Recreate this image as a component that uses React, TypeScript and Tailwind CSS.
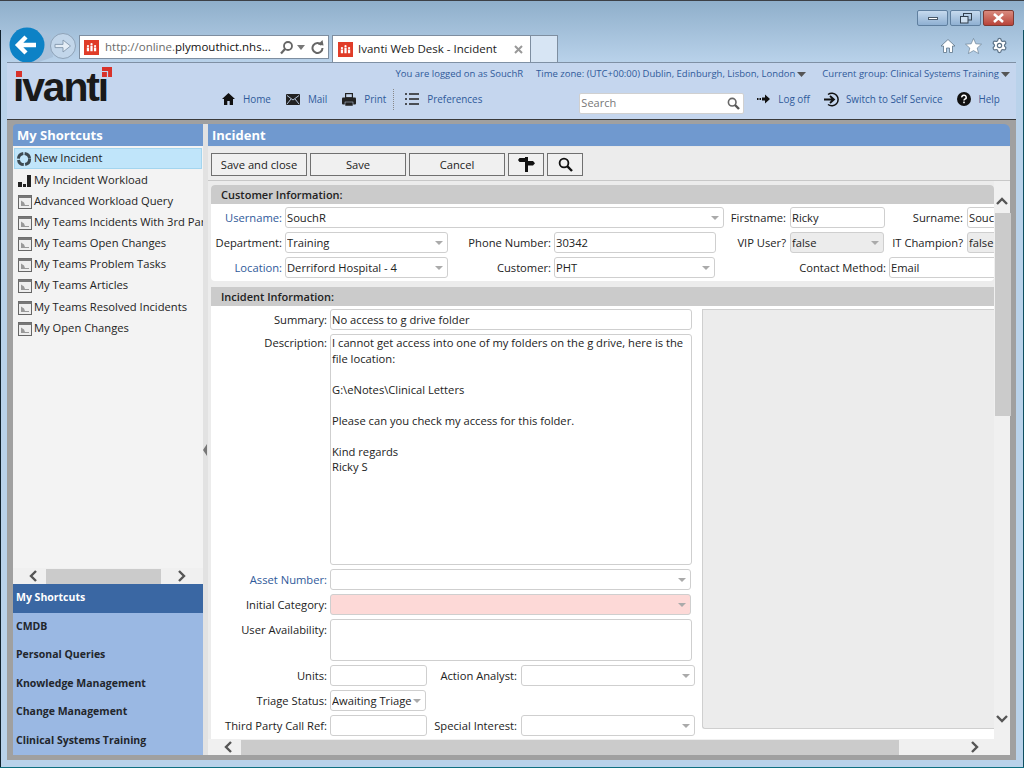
import React from "react";
import { Settings } from "lucide-react";

const FONT = "[font-family:'Open_Sans','Noto_Sans',sans-serif]";

function Chevron({ dir }: { dir: "l" | "r" | "u" | "d" }) {
  const pts = { l: "8,1 3,6 8,11", r: "4,1 9,6 4,11", u: "1,8 6,3 11,8", d: "1,4 6,9 11,4" }[dir];
  return (
    <svg width="12" height="12" viewBox="0 0 12 12" className="shrink-0">
      <polyline points={pts} fill="none" stroke="#555" strokeWidth="2.4" />
    </svg>
  );
}

function Label({ w, blue, cls, children }: { w: string; blue?: boolean; cls?: string; children: React.ReactNode }) {
  return (
    <div className={`${w} ${cls ?? ""} shrink-0 text-right whitespace-nowrap leading-[21px] ${blue ? "text-[#2f5a9a]" : "text-[#222]"}`}>
      {children}
    </div>
  );
}

function Arrow() {
  return (
    <svg width="8" height="4" viewBox="0 0 8 4" className="shrink-0 mr-[1px]">
      <polygon points="0,0 8,0 4,4" fill="#aaa" />
    </svg>
  );
}

function Field({ w, value, select, bg, h }: { w: string; value?: string; select?: boolean; bg?: string; h?: string }) {
  return (
    <div
      className={`${w} ${h ?? "h-[21px]"} ${bg ?? "bg-white"} shrink-0 border border-[#cfcfcf] rounded-[3px] flex items-center pl-[1px] pr-[3px] text-[#222] overflow-hidden`}
    >
      <div className="flex-1 min-w-0 mt-[2px] overflow-hidden whitespace-nowrap">{value}</div>
      {select && <Arrow />}
    </div>
  );
}

function RowC({ children, cls }: { children: React.ReactNode; cls?: string }) {
  return <div className={`flex h-[21px] shrink-0 ${cls ?? ""}`}>{children}</div>;
}

function ReportIcon() {
  return (
    <svg width="14" height="14" viewBox="0 0 14 14" className="shrink-0">
      <rect x="0.5" y="0.5" width="13" height="13" fill="#eee" stroke="#666" />
      <rect x="0.5" y="0.5" width="13" height="2.5" fill="#777" />
      <polygon points="3,11 3,5.5 6,7.5 7,10 11,10 11,11" fill="#999" />
    </svg>
  );
}

function RingIcon() {
  return (
    <svg width="16" height="16" viewBox="0 0 16 16" className="shrink-0">
      <circle cx="8" cy="8" r="5.6" fill="none" stroke="#3d4a52" strokeWidth="3" strokeDasharray="7.4 1.4" />
    </svg>
  );
}

function BarsIcon() {
  return (
    <svg width="14" height="14" viewBox="0 0 14 14" className="shrink-0">
      <rect x="0" y="8" width="4" height="5" fill="#222" />
      <rect x="5" y="10" width="3" height="3" fill="#222" />
      <rect x="9" y="1" width="4" height="12" fill="#222" />
    </svg>
  );
}

function ShortcutItem({ icon, text, top }: { icon: React.ReactNode; text: string; top: string }) {
  return (
    <div className={`flex items-center h-[21px] ${top} pl-[4px] gap-[2px] whitespace-nowrap text-[#222] overflow-hidden`}>
      {icon}
      <span>{text}</span>
    </div>
  );
}

function NavLink({ icon, text, gap }: { icon: React.ReactNode; text: string; gap: string }) {
  return (
    <div className={`flex items-center ${gap} text-[#2f5a9a] whitespace-nowrap`}>
      {icon}
      <span>{text}</span>
    </div>
  );
}

function ToolBtn({ w, children }: { w: string; children: React.ReactNode }) {
  return (
    <div className={`${w} h-[23px] border border-[#707070] bg-[#f0f0f0] flex items-center justify-center text-[#222] shrink-0`}>
      {children}
    </div>
  );
}

function WinBtn({ w, red, children }: { w: string; red?: boolean; children: React.ReactNode }) {
  return (
    <div
      className={`${w} h-[16px] rounded-[2px] border flex items-center justify-center ${
        red
          ? "border-[#7d3a33] bg-gradient-to-b from-[#d98a7e] to-[#b8433a]"
          : "border-[#5f7f9f] bg-gradient-to-b from-[#c6daee] to-[#8fb0d2]"
      }`}
    >
      {children}
    </div>
  );
}

function AppFav({ s }: { s: number }) {
  return (
    <svg width={s} height={s} viewBox="0 0 16 16" className="shrink-0">
      <rect width="16" height="16" fill="#e03c28" />
      <rect x="3" y="8" width="2.4" height="4" fill="#fff" />
      <rect x="6.8" y="6" width="2.4" height="6" fill="#fff" />
      <rect x="10.6" y="8" width="2.4" height="4" fill="#fff" />
      <circle cx="4.2" cy="6.4" r="1.2" fill="#fff" />
      <circle cx="8" cy="4.4" r="1.2" fill="#fff" />
      <circle cx="11.8" cy="6.4" r="1.2" fill="#fff" />
    </svg>
  );
}

export default function App() {
  return (
    <div
      className={`${FONT} relative w-[1024px] h-[768px] flex flex-col overflow-hidden text-[11.2px] border-t border-b border-t-[#3c4046] border-b-[#0f6f80] bg-[#b9d2ea]`}
    >
      {/* Window edge lines */}
      <div className="absolute left-0 top-[29px] bottom-0 w-[1px] bg-[#10202c]" />
      <div className="absolute right-0 top-[29px] bottom-0 w-[1px] bg-[#0f4f60]" />

      {/* Browser chrome */}
      <div className="h-[61px] shrink-0 flex items-end pl-[9px] pr-[10px] bg-gradient-to-b from-[#8fafcb] to-[#b9d2ea]">
        <svg width="70" height="36" viewBox="0 0 70 36" className="shrink-0 mb-[-1px]">
          <path d="M17 1 C 30 1 36 6 42 8 L 44 30 L 30 35 L 17 35 Z" fill="#a9c1da" />
          <circle cx="54" cy="19" r="12.5" fill="#c2d6ea" stroke="#8fa3b8" />
          <polygon points="46,17.4 54,17.4 54,13 61.5,19 54,25 54,20.6 46,20.6" fill="#e4edf6" stroke="#8296ab" strokeWidth="0.9" />
          <circle cx="18" cy="18" r="17.5" fill="#0d82c6" />
          <path d="M9 18 H27 M17 10 L9 18 L17 26" fill="none" stroke="#fff" strokeWidth="4.4" />
        </svg>
        <div className="w-[250px] h-[24px] mb-[3px] border border-[#7e8ea0] bg-white flex items-center pl-[4px] pr-[4px] shrink-0 text-[11.5px] text-[#6a6a6a]">
          <AppFav s={15} />
          <div className="ml-[6px] whitespace-nowrap flex-1">
            http://online.<span className="text-[#111]">plymouthict.nhs...</span>
          </div>
          <svg width="15" height="15" viewBox="0 0 15 15" className="shrink-0">
            <circle cx="9" cy="6" r="4" fill="none" stroke="#666" strokeWidth="1.8" />
            <path d="M6 9 L2 13.5" stroke="#666" strokeWidth="2.2" />
          </svg>
          <svg width="8" height="5" viewBox="0 0 8 5" className="shrink-0 ml-[3px]">
            <polygon points="0,0 8,0 4,5" fill="#777" />
          </svg>
          <svg width="13" height="14" viewBox="0 0 13 14" className="shrink-0 ml-[6px]">
            <path d="M10.5 5 A5 5 0 1 0 11.5 8" fill="none" stroke="#666" strokeWidth="2" />
            <polygon points="7,4.5 12.5,5.5 11.5,0" fill="#666" />
          </svg>
        </div>
        <div className="ml-[3px] w-[199px] h-[27px] border border-b-0 border-[#7e8ea0] bg-white flex items-center pl-[5px] pr-[6px] shrink-0 text-[11.5px] text-[#222]">
          <AppFav s={15} />
          <span className="ml-[5px] whitespace-nowrap flex-1">Ivanti Web Desk - Incident</span>
          <svg width="9" height="9" viewBox="0 0 9 9" className="shrink-0 mr-[1px]">
            <path d="M1 1 L8 8 M8 1 L1 8" stroke="#999" strokeWidth="2" />
          </svg>
        </div>
        <div className="w-[27px] h-[27px] border border-l-0 border-b-0 border-[#7e8ea0] bg-[#d7e5f4] shrink-0" />
        <div className="flex-1 h-full flex flex-col items-end pt-[9px]">
          <div className="flex gap-[2px]">
            <WinBtn w="w-[31px]">
              <div className="w-[10px] h-[3px] bg-white border border-[#4a5a6a]" />
            </WinBtn>
            <WinBtn w="w-[31px]">
              <svg width="12" height="11" viewBox="0 0 12 11">
                <rect x="3.5" y="0.5" width="8" height="6.5" fill="none" stroke="#33414f" />
                <rect x="0.5" y="3.5" width="7.5" height="6.5" fill="#cfe0f0" stroke="#33414f" />
              </svg>
            </WinBtn>
            <WinBtn w="w-[31px]" red>
              <svg width="13" height="10" viewBox="0 0 13 10">
                <path d="M2 1 L11 9 M11 1 L2 9" stroke="#fff" strokeWidth="2.6" />
              </svg>
            </WinBtn>
          </div>
          <div className="flex items-center gap-[9px] mt-[11px] pr-[6px]">
            <svg width="16" height="16" viewBox="0 0 16 16">
              <path d="M8 1.5 L15 8 H12.5 V14.5 H9.5 V10 H6.5 V14.5 H3.5 V8 H1 Z" fill="#fff" stroke="#5d7388" strokeWidth="0.8" />
            </svg>
            <svg width="17" height="16" viewBox="0 0 17 16">
              <polygon points="8.5,0.5 10.8,5.8 16.5,6.2 12.2,10 13.6,15.5 8.5,12.6 3.4,15.5 4.8,10 0.5,6.2 6.2,5.8" fill="#fff" stroke="#5d7388" strokeWidth="0.6" />
            </svg>
            <Settings size={17} fill="#fff" stroke="#5d7388" strokeWidth={1.7} />
          </div>
        </div>
      </div>

      {/* Page */}
      <div className="flex-1 min-h-0 flex flex-col ml-[7px] mr-[8px] mb-[7px]">
        {/* App header */}
        <div className="h-[58px] shrink-0 bg-[#c5d6ee] border-t border-t-[#7f90a4] border-b border-b-[#3a3a3a] flex text-[9.9px]">
          <div className="relative w-[215px] shrink-0 overflow-hidden">
            <div className="absolute left-[6px] top-[-1px] text-[41px] leading-[50px] font-bold text-[#1a1a1a] tracking-[-2.2px] [font-family:'Liberation_Sans',sans-serif]">
              ivanti
            </div>
            <div className="absolute left-[8px] top-[6px] w-[8px] h-[10px] bg-[#c5d6ee]" />
            <div className="absolute left-[9px] top-[8px] w-[6px] h-[6px] bg-[#d8322a]" />
            <div className="absolute left-[90px] top-[4px] w-[16px] h-[12px] bg-[#c5d6ee]" />
            <svg width="10" height="10" viewBox="0 0 10 10" className="absolute left-[95px] top-[4px]">
              <polygon points="0,0 10,0 10,10 0,10" fill="#d8322a" />
              <path d="M0 4.5 H5.5 V10" fill="none" stroke="#c5d6ee" strokeWidth="1.2" />
            </svg>
          </div>
          <div className="flex-1 flex flex-col pt-[4px]">
            <div className="h-[14px] flex justify-end items-center whitespace-nowrap text-[9.5px] text-[#2f5a9a] pr-[6px]">
              <span>You are logged on as SouchR</span>
              <span className="ml-[13px]">Time zone: (UTC+00:00) Dublin, Edinburgh, Lisbon, London</span>
              <svg width="9" height="5" viewBox="0 0 9 5" className="ml-[2px]">
                <polygon points="0,0 9,0 4.5,5" fill="#555" />
              </svg>
              <span className="ml-[16px]">Current group: Clinical Systems Training</span>
              <svg width="9" height="5" viewBox="0 0 9 5" className="ml-[2px]">
                <polygon points="0,0 9,0 4.5,5" fill="#555" />
              </svg>
            </div>
            <div className="flex items-center mt-[8px] h-[21px]">
              <NavLink
                gap="gap-[8px]"
                text="Home"
                icon={
                  <svg width="13" height="12" viewBox="0 0 13 12">
                    <path d="M6.5 0 L13 6 H11 V12 H7.7 V8 H5.3 V12 H2 V6 H0 Z" fill="#111" />
                  </svg>
                }
              />
              <div className="ml-[15px]">
                <NavLink
                  gap="gap-[8px]"
                  text="Mail"
                  icon={
                    <svg width="14" height="11" viewBox="0 0 14 11">
                      <rect width="14" height="11" rx="1" fill="#222" />
                      <path d="M1 1.5 L7 6 L13 1.5 M1 10 L5 5 M13 10 L9 5" stroke="#c5d6ee" strokeWidth="0.9" fill="none" />
                    </svg>
                  }
                />
              </div>
              <div className="ml-[15px]">
                <NavLink
                  gap="gap-[8px]"
                  text="Print"
                  icon={
                    <svg width="14" height="13" viewBox="0 0 14 13">
                      <rect x="3" y="0" width="8" height="5" fill="#222" />
                      <rect x="4.2" y="1.2" width="5.6" height="3" fill="#c5d6ee" />
                      <rect x="0" y="4.5" width="14" height="7" rx="1" fill="#222" />
                      <rect x="3" y="9" width="8" height="4" fill="#222" stroke="#c5d6ee" strokeWidth="0.5" />
                    </svg>
                  }
                />
              </div>
              <div className="h-[21px] ml-[7px] border-l border-dotted border-l-[#888]" />
              <div className="ml-[11px]">
                <NavLink
                  gap="gap-[8px]"
                  text="Preferences"
                  icon={
                    <svg width="14" height="12" viewBox="0 0 14 12">
                      <path d="M0 1 H2 M0 6 H2 M0 11 H2 M4 1 H14 M4 6 H14 M4 11 H14" stroke="#222" strokeWidth="1.6" />
                    </svg>
                  }
                />
              </div>
              <div className="ml-[97px] mt-[8px] w-[165px] h-[21px] shrink-0 bg-white rounded-[2px] border border-[#d0d0d0] flex items-center pl-[1px] pr-[3px] text-[11px] text-[#777]">
                <span className="flex-1">Search</span>
                <svg width="13" height="13" viewBox="0 0 13 13">
                  <circle cx="5.2" cy="5.2" r="3.8" fill="#fff" stroke="#666" strokeWidth="1.6" />
                  <path d="M8 8 L12 12" stroke="#555" strokeWidth="2.4" />
                </svg>
              </div>
              <div className="ml-[13px]">
                <NavLink
                  gap="gap-[8px]"
                  text="Log off"
                  icon={
                    <svg width="13" height="10" viewBox="0 0 13 10">
                      <path d="M0 4 H1.5 V6 H0 Z M2.5 4 H4 V6 H2.5 Z M5 3.5 H8 V0.5 L13 5 L8 9.5 V6.5 H5 Z" fill="#111" />
                    </svg>
                  }
                />
              </div>
              <div className="ml-[14px]">
                <NavLink
                  gap="gap-[7px]"
                  text="Switch to Self Service"
                  icon={
                    <svg width="15" height="15" viewBox="0 0 15 15">
                      <path d="M4 2.5 A6.3 6.3 0 1 1 4 12.5" fill="none" stroke="#111" strokeWidth="1.5" />
                      <path d="M0 7.5 H9 M6 4 L10 7.5 L6 11" fill="none" stroke="#111" strokeWidth="1.8" />
                    </svg>
                  }
                />
              </div>
              <div className="ml-[15px]">
                <NavLink
                  gap="gap-[7px]"
                  text="Help"
                  icon={
                    <svg width="14" height="14" viewBox="0 0 14 14">
                      <circle cx="7" cy="7" r="7" fill="#111" />
                      <path d="M4.8 5.4 A2.2 2.1 0 1 1 7.6 7.3 Q7 7.6 7 8.6" fill="none" stroke="#fff" strokeWidth="1.5" />
                      <rect x="6.2" y="9.6" width="1.6" height="1.6" fill="#fff" />
                    </svg>
                  }
                />
              </div>
            </div>
          </div>
        </div>

        {/* Gray frame */}
        <div className="flex-1 min-h-0 bg-[#a0a0a0] pt-[4px] pl-[6px] pr-[6px] pb-[5px] flex">
          {/* Sidebar */}
          <div className="w-[190px] shrink-0 flex flex-col">
            <div className="h-[22px] shrink-0 rounded-tl-[4px] bg-[#7099cf] text-white font-bold text-[13px] leading-[22px] pl-[4px]">
              My Shortcuts
            </div>
            <div className="flex-1 min-h-0 bg-[#f3f3f3] pt-[2px] pl-[1px]">
              <div className="flex items-center h-[21px] w-[188px] bg-[#c0e5fa] border border-[#a3d5ef] pl-[1px] gap-[2px] text-[#222] whitespace-nowrap">
                <RingIcon />
                <span>New Incident</span>
              </div>
              <ShortcutItem top="mt-[1px]" icon={<BarsIcon />} text="My Incident Workload" />
              <ShortcutItem top="" icon={<ReportIcon />} text="Advanced Workload Query" />
              <ShortcutItem top="" icon={<ReportIcon />} text="My Teams Incidents With 3rd Party" />
              <ShortcutItem top="" icon={<ReportIcon />} text="My Teams Open Changes" />
              <ShortcutItem top="" icon={<ReportIcon />} text="My Teams Problem Tasks" />
              <ShortcutItem top="" icon={<ReportIcon />} text="My Teams Articles" />
              <ShortcutItem top="mt-[1px]" icon={<ReportIcon />} text="My Teams Resolved Incidents" />
              <ShortcutItem top="" icon={<ReportIcon />} text="My Open Changes" />
            </div>
            <div className="h-[16px] shrink-0 bg-[#f0f0f0] flex items-center pl-[15px]">
              <Chevron dir="l" />
              <div className="ml-[6px] w-[115px] h-[15px] bg-[#cbcbcb]" />
              <div className="ml-[14px]">
                <Chevron dir="r" />
              </div>
            </div>
            <div className="h-[29px] shrink-0 bg-[#3a67a3] text-white font-bold text-[10.5px] pl-[3px] pb-[1px] flex items-center">My Shortcuts</div>
            <div className="bg-[#9ab8e3] text-[#22262c] font-bold text-[10.5px] flex flex-col">
              <div className="h-[28px] pl-[3px] pb-[1px] flex items-center">CMDB</div>
              <div className="h-[29px] pl-[3px] pb-[1px] flex items-center">Personal Queries</div>
              <div className="h-[28px] pl-[3px] pb-[1px] flex items-center">Knowledge Management</div>
              <div className="h-[29px] pl-[3px] pb-[1px] flex items-center">Change Management</div>
              <div className="h-[28px] pl-[3px] pb-[1px] flex items-center">Clinical Systems Training</div>
            </div>
          </div>

          {/* Splitter */}
          <div className="w-[5px] shrink-0 bg-[#e2e2e2] flex items-center">
            <svg width="4" height="12" viewBox="0 0 4 12" className="mt-[20px]">
              <polygon points="4,0 4,12 0,6" fill="#777" />
            </svg>
          </div>

          {/* Main */}
          <div className="flex-1 min-w-0 flex flex-col">
            <div className="h-[23px] shrink-0 rounded-tr-[6px] bg-[#7099cf] border-b border-b-[#e8e8e8] text-white font-bold text-[13px] leading-[22px] pl-[4px]">
              Incident
            </div>
            <div className="h-[34px] shrink-0 bg-[#ececec] border-b border-b-[#c8c8c8] flex items-start pt-[6px] pl-[3px] gap-[3px]">
              <ToolBtn w="w-[96px]"><span className="mt-[2px]">Save and close</span></ToolBtn>
              <ToolBtn w="w-[96px]"><span className="mt-[2px]">Save</span></ToolBtn>
              <ToolBtn w="w-[96px]"><span className="mt-[2px]">Cancel</span></ToolBtn>
              <ToolBtn w="w-[36px]">
                <svg width="17" height="15" viewBox="0 0 17 15">
                  <rect x="7" y="0" width="3" height="15" fill="#111" />
                  <polygon points="7,1 1.5,1 0,3 1.5,5 7,5" fill="#111" />
                  <polygon points="10,4 15,4 17,6.2 15,8.5 10,8.5" fill="#111" />
                </svg>
              </ToolBtn>
              <ToolBtn w="w-[36px]">
                <svg width="15" height="15" viewBox="0 0 15 15">
                  <circle cx="6" cy="6" r="4.4" fill="none" stroke="#111" strokeWidth="1.8" />
                  <path d="M9.2 9.2 L14 14" stroke="#111" strokeWidth="2.4" />
                </svg>
              </ToolBtn>
            </div>

            <div className="flex-1 min-h-0 flex">
              {/* Scrolling form */}
              <div className="w-[786px] shrink-0 bg-[#ececec] pl-[3px] pt-[4px] overflow-hidden flex flex-col">
                <div className="bg-white rounded-[4px] h-[96px] shrink-0 overflow-hidden flex flex-col">
                  <div className="h-[19px] shrink-0 bg-[#cbcbcb] pl-[10px] font-semibold text-[#222] text-[11px] leading-[19px]">
                    Customer Information:
                  </div>
                  <div className="flex flex-col gap-[4px] pt-[3px]">
                    <RowC>
                      <Label w="w-[71px]" blue>Username:</Label>
                      <div className="w-[3px] shrink-0" />
                      <Field w="w-[439px]" value="SouchR" select />
                      <Label w="w-[62px]">Firstname:</Label>
                      <div className="w-[4px] shrink-0" />
                      <Field w="w-[95px]" value="Ricky" />
                      <Label w="w-[78px]">Surname:</Label>
                      <div className="w-[4px] shrink-0" />
                      <Field w="w-[60px]" value="Souch" />
                    </RowC>
                    <RowC>
                      <Label w="w-[71px]">Department:</Label>
                      <div className="w-[3px] shrink-0" />
                      <Field w="w-[163px]" value="Training" select />
                      <Label w="w-[103px]">Phone Number:</Label>
                      <div className="w-[3px] shrink-0" />
                      <Field w="w-[162px]" value="30342" />
                      <Label w="w-[70px]">VIP User?</Label>
                      <div className="w-[4px] shrink-0" />
                      <Field w="w-[94px]" value="false" select bg="bg-[#ececec]" />
                      <Label w="w-[79px]">IT Champion?</Label>
                      <div className="w-[4px] shrink-0" />
                      <Field w="w-[60px]" value="false" bg="bg-[#ececec]" />
                    </RowC>
                    <RowC>
                      <Label w="w-[71px]" blue>Location:</Label>
                      <div className="w-[3px] shrink-0" />
                      <Field w="w-[163px]" value="Derriford Hospital - 4" select />
                      <Label w="w-[103px]">Customer:</Label>
                      <div className="w-[3px] shrink-0" />
                      <Field w="w-[161px]" value="PHT" select />
                      <Label w="w-[171px]">Contact Method:</Label>
                      <div className="w-[3px] shrink-0" />
                      <Field w="w-[120px]" value="Email" />
                    </RowC>
                  </div>
                </div>

                <div className="mt-[6px] flex-1 min-h-0 bg-white rounded-t-[4px] flex flex-col">
                  <div className="h-[19px] shrink-0 bg-[#cbcbcb] pl-[10px] font-semibold text-[#222] text-[11px] leading-[19px]">
                    Incident Information:
                  </div>
                  <div className="flex pt-[3px]">
                    <div className="w-[491px] shrink-0 flex flex-col gap-[4px]">
                      <RowC>
                        <Label w="w-[116px]">Summary:</Label>
                        <div className="w-[3px] shrink-0" />
                        <Field w="w-[362px]" value="No access to g drive folder" />
                      </RowC>
                      <div className="flex h-[231px] shrink-0">
                        <Label w="w-[116px]" cls="-mt-[2px]">Description:</Label>
                        <div className="w-[3px] shrink-0" />
                        <div className="w-[362px] h-[231px] border border-[#cfcfcf] rounded-[3px] px-[1px] text-[#222] leading-[15.5px] whitespace-nowrap">
                          <div>I cannot get access into one of my folders on the g drive, here is the</div>
                          <div>file location:</div>
                          <div className="h-[15.5px]" />
                          <div>G:\eNotes\Clinical Letters</div>
                          <div className="h-[15.5px]" />
                          <div>Please can you check my access for this folder.</div>
                          <div className="h-[15.5px]" />
                          <div>Kind regards</div>
                          <div>Ricky S</div>
                        </div>
                      </div>
                      <RowC>
                        <Label w="w-[116px]" blue>Asset Number:</Label>
                        <div className="w-[3px] shrink-0" />
                        <Field w="w-[361px]" select />
                      </RowC>
                      <RowC>
                        <Label w="w-[116px]">Initial Category:</Label>
                        <div className="w-[3px] shrink-0" />
                        <Field w="w-[361px]" select bg="bg-[#fdd9d7]" />
                      </RowC>
                      <div className="flex h-[42px] shrink-0">
                        <Label w="w-[116px]">User Availability:</Label>
                        <div className="w-[3px] shrink-0" />
                        <Field w="w-[362px]" h="h-[42px]" />
                      </div>
                      <RowC>
                        <Label w="w-[116px]">Units:</Label>
                        <div className="w-[3px] shrink-0" />
                        <Field w="w-[97px]" />
                        <Label w="w-[90px]">Action Analyst:</Label>
                        <div className="w-[4px] shrink-0" />
                        <Field w="w-[174px]" select />
                      </RowC>
                      <RowC>
                        <Label w="w-[116px]">Triage Status:</Label>
                        <div className="w-[3px] shrink-0" />
                        <Field w="w-[96px]" value="Awaiting Triage" select />
                      </RowC>
                      <RowC>
                        <Label w="w-[116px]">Third Party Call Ref:</Label>
                        <div className="w-[3px] shrink-0" />
                        <Field w="w-[97px]" />
                        <Label w="w-[90px]">Special Interest:</Label>
                        <div className="w-[4px] shrink-0" />
                        <Field w="w-[174px]" select />
                      </RowC>
                    </div>
                    <div className="w-[292px] h-[420px] shrink-0 bg-[#ececec] border border-r-0 border-[#cfcfcf] rounded-bl-[3px]" />
                  </div>
                </div>
              </div>

              {/* Vertical scrollbar */}
              <div className="flex-1 bg-[#f0f0f0] flex flex-col items-center pt-[15px] pb-[15px]">
                <Chevron dir="u" />
                <div className="w-full h-[203px] bg-[#cbcbcb] mt-[5px] ml-[1px]" />
                <div className="flex-1" />
                <Chevron dir="d" />
              </div>
            </div>

            {/* Horizontal scrollbar */}
            <div className="h-[16px] shrink-0 bg-[#f0f0f0] flex items-center pl-[15px]">
              <Chevron dir="l" />
              <div className="ml-[6px] w-[658px] h-[15px] bg-[#cbcbcb]" />
              <div className="ml-[69px]">
                <Chevron dir="r" />
              </div>
            </div>
          </div>
        </div>
      </div>
    </div>
  );
}
